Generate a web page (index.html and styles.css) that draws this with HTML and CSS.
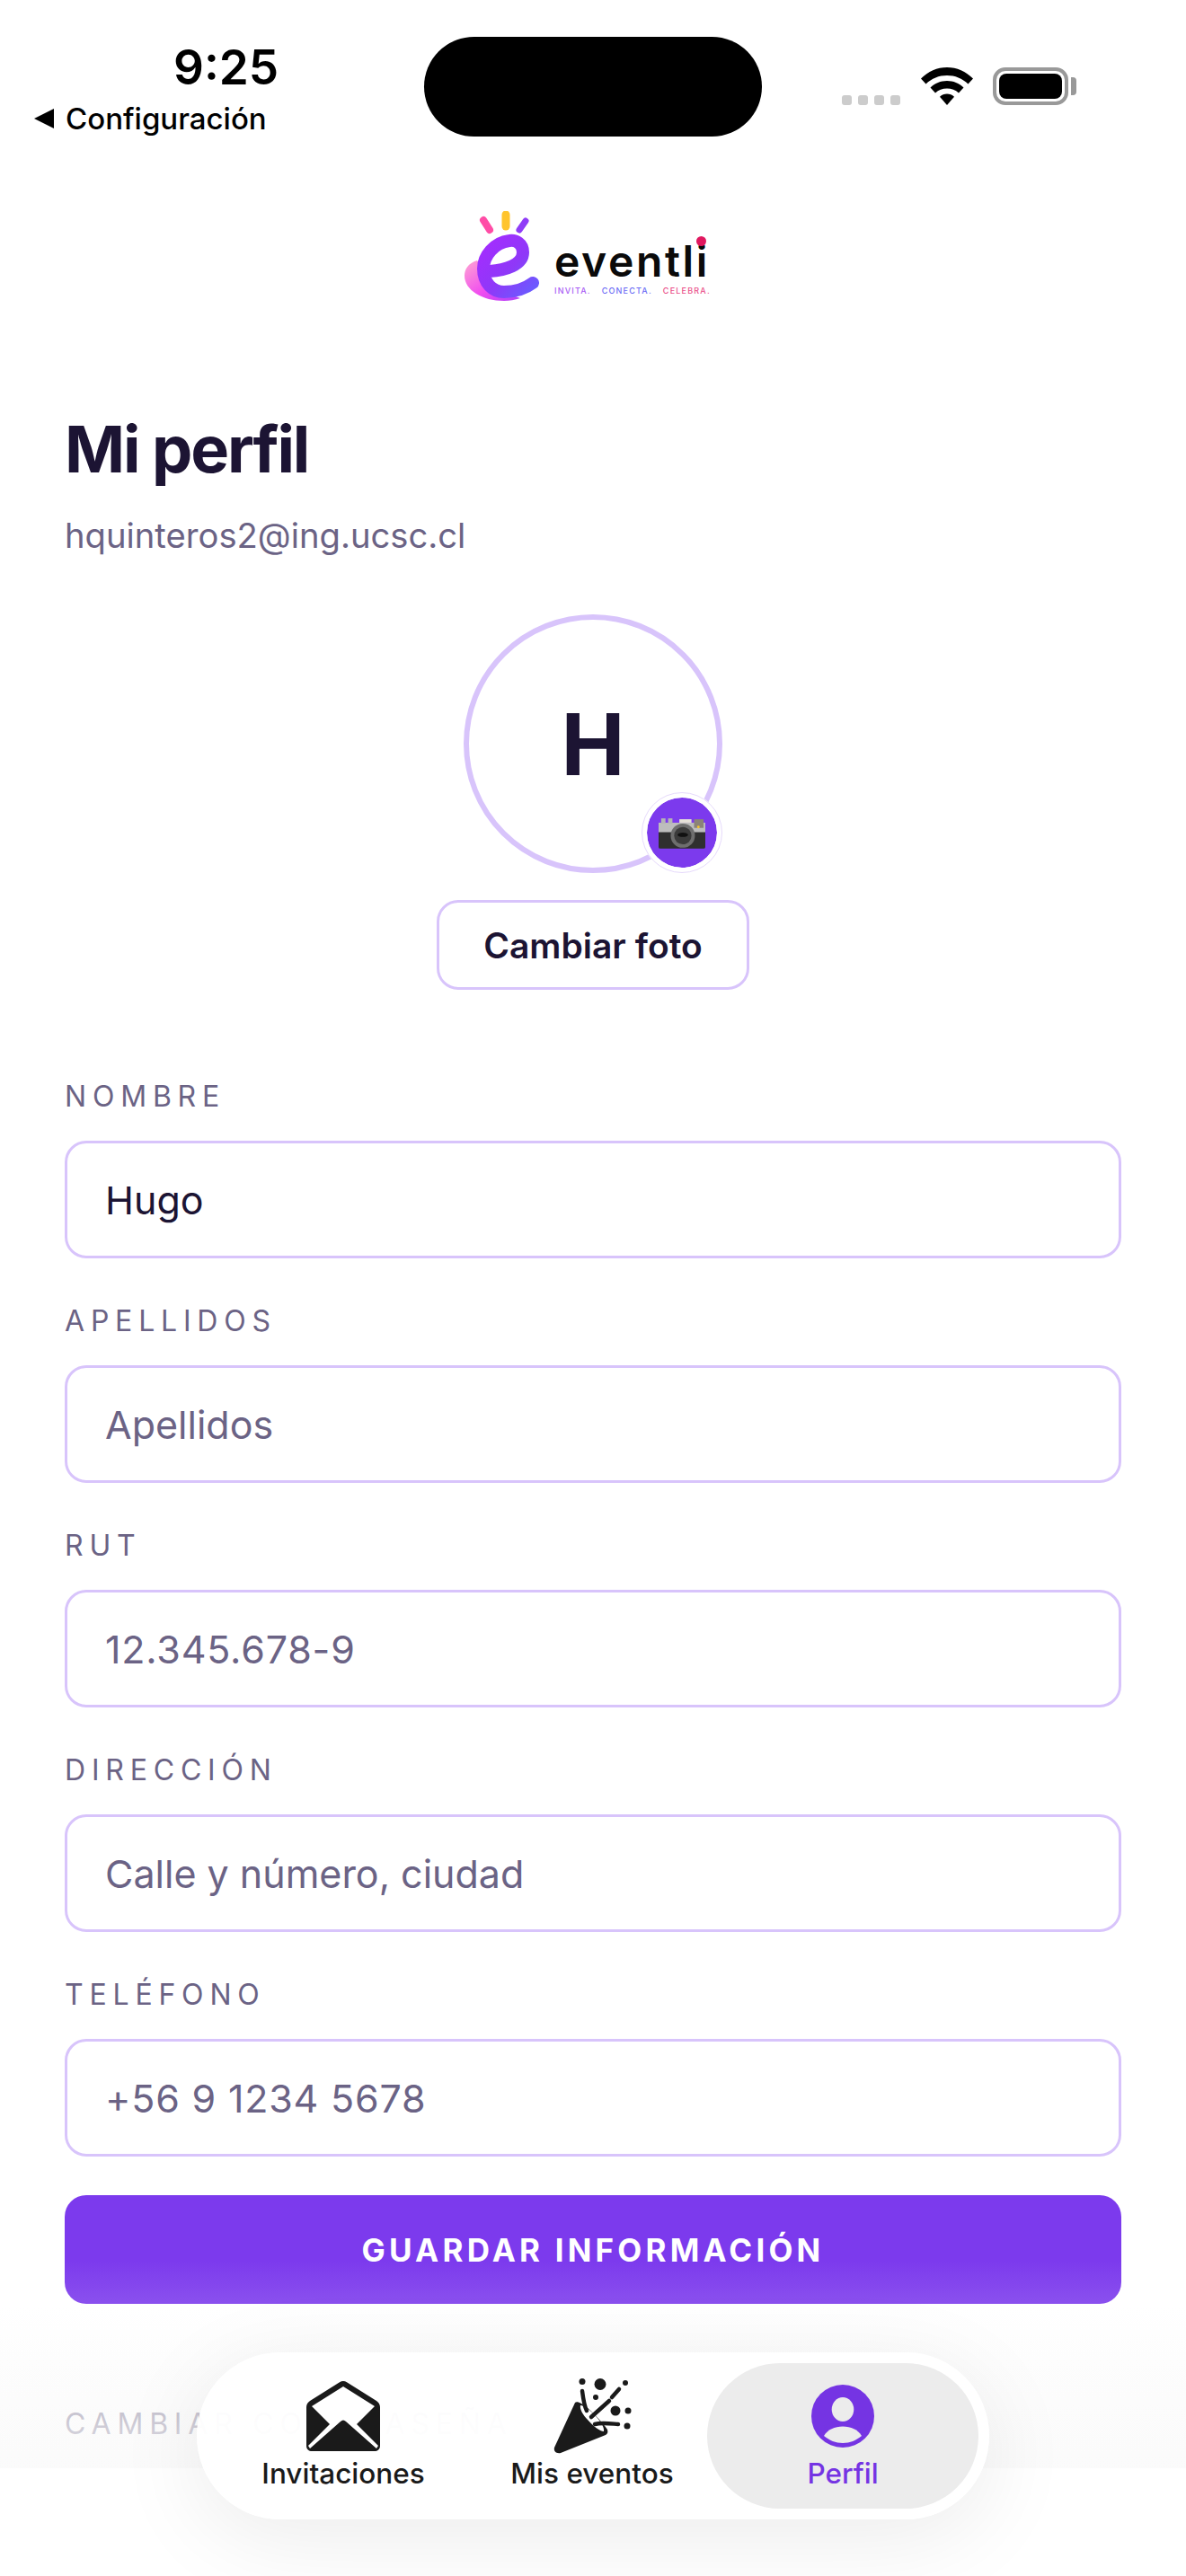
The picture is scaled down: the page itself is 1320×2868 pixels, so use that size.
FILE: index.html
```html
<!DOCTYPE html>
<html lang="es">
<head>
    <meta charset="UTF-8">
    <meta name="viewport" content="width=device-width, initial-scale=1.0">
    <title>Mi perfil - eventli</title>
    <link rel="stylesheet" href="styles.css">
</head>
<body>
    <div class="screen">
        <header class="status-bar">
            <div class="status-left">
                <div class="clock">9:25</div>
                <div class="back-link"><span class="back-arrow"></span>Configuración</div>
            </div>
            <div class="island"></div>
            <div class="status-right">
                <div class="signal"><span></span><span></span><span></span><span></span></div>
                <svg class="wifi" viewBox="0 0 58 42">
                    <path d="M29 0C40 0 50 4.500 58 12.500L52.500 18.500C46 12.300 38 9 29 9S12 12.300 5.500 18.500L0 12.500C8 4.500 18 0 29 0Z"/>
                    <path d="M29 15C36 15 42.500 17.700 47.500 22.500L42 28.500C38.500 25.200 34 23.500 29 23.500S19.500 25.200 16 28.500L10.500 22.500C15.500 17.700 22 15 29 15Z"/>
                    <path d="M29 29.500C32 29.500 34.800 30.500 37 32.800L29 42L21 32.800C23.200 30.500 26 29.500 29 29.500Z"/>
                </svg>
                <div class="battery"><div class="battery-level"></div></div>
                <div class="battery-cap"></div>
            </div>
        </header>

        <div class="logo">
            <svg class="logo-mark" viewBox="0 0 83 100">
                <defs>
                    <linearGradient id="eStroke" x1="0" y1="0" x2="1" y2="1">
                        <stop offset="0" stop-color="#a52cff"/>
                        <stop offset="0.55" stop-color="#8f38f8"/>
                        <stop offset="1" stop-color="#6a5cff"/>
                    </linearGradient>
                    <linearGradient id="eShade" x1="0" y1="0" x2="1" y2="1">
                        <stop offset="0" stop-color="#ffa6d2"/>
                        <stop offset="0.55" stop-color="#f04cf0"/>
                        <stop offset="1" stop-color="#b040f8"/>
                    </linearGradient>
                </defs>
                <path d="M21 10L28 21" stroke="#ff4da6" stroke-width="8" stroke-linecap="round"/>
                <path d="M46 4V17" stroke="#ffc42e" stroke-width="9" stroke-linecap="round"/>
                <path d="M68 11L61 21" stroke="#8f3cf7" stroke-width="7" stroke-linecap="round"/>
                <path d="M14 55C4 58 0 65 0 72C0 88 20 100 44 100C50 100 56 99 62 97L44 90C30 90 21 78 21 64Z" fill="url(#eShade)"/>
                <path d="M28 67C45 66 65 60 65 46C65 36 57 32 50 33C33 35 21 50 21 64C21 80 31 90 44 90C57 90 68 86 76 80" fill="none" stroke="url(#eStroke)" stroke-width="14" stroke-linecap="round"/>
            </svg>
            <div class="logo-text">
                <div class="logo-name">eventl<span class="logo-i">i</span></div>
                <div class="logo-tag"><span class="tag-a">INVITA.</span><span class="tag-b">CONECTA.</span><span class="tag-c">CELEBRA.</span></div>
            </div>
        </div>

        <main class="content">
            <h1 class="page-title">Mi perfil</h1>
            <p class="page-email">hquinteros2@ing.ucsc.cl</p>

            <div class="avatar-block">
                <div class="avatar">
                    H
                    <div class="avatar-badge">
                        <svg class="camera" viewBox="0 0 54 36">
                            <rect x="0" y="6" width="54" height="30" rx="2" fill="#2f2f2f"/>
                            <rect x="0" y="6" width="54" height="11" fill="#bdbdbd"/>
                            <rect x="3" y="1" width="5" height="6" fill="#b5b5b5"/>
                            <rect x="11" y="1" width="5" height="6" fill="#b5b5b5"/>
                            <rect x="24" y="2" width="14" height="4" fill="#e6e2d8"/>
                            <rect x="41" y="2" width="11" height="10" fill="#8b8378"/>
                            <circle cx="28" cy="21" r="14" fill="#6e6e6e"/>
                            <circle cx="28" cy="21" r="10" fill="#3b3b3b"/>
                            <ellipse cx="28" cy="20" rx="6" ry="2.500" fill="#111"/>
                            <circle cx="46" cy="11" r="1.500" fill="#f4c430"/>
                        </svg>
                    </div>
                </div>
                <button class="photo-button">Cambiar foto</button>
            </div>

            <form class="profile-form">
                <label class="field-label">NOMBRE</label>
                <div class="field-box field-filled">Hugo</div>
                <label class="field-label">APELLIDOS</label>
                <div class="field-box">Apellidos</div>
                <label class="field-label">RUT</label>
                <div class="field-box field-number">12.345.678-9</div>
                <label class="field-label">DIRECCIÓN</label>
                <div class="field-box">Calle y número, ciudad</div>
                <label class="field-label">TELÉFONO</label>
                <div class="field-box field-number">+56 9 1234 5678</div>
                <button class="save-button" type="button">GUARDAR INFORMACIÓN</button>
                <label class="field-label password-label">CAMBIAR CONTRASEÑA</label>
            </form>
        </main>

        <div class="bottom-fade"></div>

        <nav class="tab-bar">
            <div class="tab">
                <div class="tab-icon">
                    <svg width="82" height="78" viewBox="0 0 82 78">
                        <path d="M37 1.200C39.500 -0.400 42.500 -0.400 45 1.200L78 22C80.500 23.800 82 26 82 29V72C82 76 79 78 76 78H6C3 78 0 76 0 72V29C0 26 1.500 23.800 4 22Z" fill="#1a1a1a"/>
                        <path d="M41 6L76 28L56 48L80 72L78 75L44 45C42 43 40 43 38 45L4 75L2 72L26 48L6 28Z" fill="#fff"/>
                    </svg>
                </div>
                <span class="tab-label">Invitaciones</span>
            </div>
            <div class="tab">
                <div class="tab-icon">
                    <svg width="87" height="84" viewBox="0 0 87 84">
                        <path d="M24 27C26 25 31 27 38 33C47 41 56 51 60 57C61 60 60 62 58 63L8 83C3 84 0 81 1 77Z" fill="#1a1a1a"/>
                        <path d="M30 30C34 30 42 36 48 43C53 49 57 55 56 59C52 59 44 53 38 46C33 41 29 34 30 30Z" fill="#fff"/>
                        <g fill="none" stroke="#1a1a1a" stroke-width="4.500" stroke-linecap="round">
                            <path d="M32 14C33 22 34 30 37 36"/>
                            <path d="M62 25L42 43"/>
                            <path d="M73 12L65 21"/>
                            <path d="M46 51C53 49 60 50 72 51"/>
                        </g>
                        <g fill="#1a1a1a">
                            <circle cx="32" cy="3.500" r="3.500"/>
                            <circle cx="52" cy="6.500" r="6.500"/>
                            <circle cx="80" cy="5" r="3"/>
                            <circle cx="47" cy="21" r="3"/>
                            <circle cx="69" cy="36" r="5.500"/>
                            <circle cx="83" cy="36" r="3.500"/>
                            <circle cx="82" cy="53" r="3.500"/>
                        </g>
                    </svg>
                </div>
                <span class="tab-label">Mis eventos</span>
            </div>
            <div class="tab tab-active">
                <div class="tab-icon">
                    <svg width="70" height="70" viewBox="0 0 70 70">
                        <circle cx="35" cy="35" r="35" fill="#7534e3"/>
                        <ellipse cx="35" cy="27.500" rx="12.300" ry="13.500" fill="#ececec"/>
                        <path d="M14 57C18 50 26 46.500 35 46.500S52 50 56 57C50 62 43 65 35 65S20 62 14 57Z" fill="#ececec"/>
                    </svg>
                </div>
                <span class="tab-label">Perfil</span>
            </div>
        </nav>
    </div>
</body>
</html>
```

FILE: styles.css
```css
* {
    box-sizing: border-box;
}
html, body {
    margin: 0;
    padding: 0;
    background-color: #fff;
}
body {
    font-family: Inter, "Noto Sans", sans-serif;
    color: #1c1433;
}
.screen {
    position: relative;
    width: 1320px;
    height: 2868px;
    overflow: hidden;
    background-color: #fff;
}

/* status bar */
.status-bar {
    display: flex;
    height: 160px;
    padding-top: 41px;
}
.status-left {
    width: 472px;
    flex-shrink: 0;
}
.clock {
    margin-left: 193px;
    padding-top: 5px;
    font-size: 53px;
    line-height: 58px;
    font-weight: 600;
    color: #000;
}
.back-link {
    display: flex;
    align-items: center;
    margin-left: 38px;
    margin-top: 8px;
    font-size: 33px;
    line-height: 40px;
    font-weight: 500;
    color: #000;
}
.back-arrow {
    width: 0;
    height: 0;
    margin-right: 13px;
    border-top: 11px solid transparent;
    border-bottom: 11px solid transparent;
    border-right: 22px solid #000;
}
.island {
    width: 376px;
    height: 111px;
    flex-shrink: 0;
    background-color: #000;
    border-radius: 56px;
}
.status-right {
    display: flex;
    align-items: flex-end;
    height: 76px;
    margin-left: 89px;
}
.signal {
    display: flex;
    gap: 7px;
}
.signal span {
    width: 11px;
    height: 11px;
    border-radius: 3px;
    background-color: #ccc;
}
.wifi {
    width: 58px;
    height: 42px;
    margin-left: 23px;
}
.battery {
    width: 84px;
    height: 42px;
    margin-left: 22px;
    padding: 3px;
    border: 4px solid #999;
    border-radius: 14px;
}
.battery-level {
    width: 100%;
    height: 100%;
    background-color: #000;
    border-radius: 8px;
}
.battery-cap {
    width: 6px;
    height: 20px;
    margin-left: 3px;
    margin-bottom: 11px;
    background-color: #999;
    border-radius: 0 4px 4px 0;
}

/* logo */
.logo {
    display: flex;
    justify-content: center;
    align-items: flex-end;
    height: 180px;
    padding-bottom: 5px;
}
.logo-mark {
    width: 83px;
    height: 100px;
    margin-left: -13px;
}
.logo-text {
    width: 173px;
    margin-left: 17px;
    margin-bottom: 6px;
}
.logo-name {
    font-size: 48px;
    line-height: 48px;
    letter-spacing: 2.600px;
    font-weight: 600;
    color: #0a0a0a;
    white-space: nowrap;
}
.logo-i {
    position: relative;
}
.logo-i::before {
    content: "";
    position: absolute;
    top: 2px;
    left: 0;
    width: 11px;
    height: 11px;
    border-radius: 50%;
    background-color: #e0185f;
}
.logo-tag {
    display: flex;
    gap: 12px;
    margin-top: 4px;
    font-size: 9px;
    line-height: 10px;
    letter-spacing: 1.200px;
    font-weight: 500;
    white-space: nowrap;
}
.tag-a { color: #a85cf5; }
.tag-b { color: #6c6cf5; }
.tag-c { color: #ea4f8a; }

/* content */
.content {
    padding: 0 72px;
}
.page-title {
    margin: 119px 0 0;
    font-size: 72px;
    line-height: 82px;
    letter-spacing: -2.200px;
    font-weight: 700;
    color: #1c1433;
}
.page-email {
    margin: 32px 0 0;
    font-size: 38.200px;
    line-height: 46px;
    color: #6b6385;
}
.avatar-block {
    display: flex;
    flex-direction: column;
    align-items: center;
    margin-top: 65px;
}
.avatar {
    position: relative;
    display: flex;
    align-items: center;
    justify-content: center;
    width: 288px;
    height: 288px;
    border: 6px solid #d8c4fb;
    border-radius: 50%;
    font-size: 95px;
    font-weight: 700;
    color: #1c1433;
}
.avatar-badge {
    position: absolute;
    right: -6px;
    bottom: -6px;
    display: flex;
    align-items: center;
    justify-content: center;
    width: 90px;
    height: 90px;
    background-color: #7c3aed;
    background-clip: padding-box;
    border: 6px solid #fff;
    border-radius: 50%;
    outline: 1px solid #e6dafc;
    outline-offset: -1px;
}
.camera {
    width: 52px;
    height: 35px;
}
.photo-button {
    width: 348px;
    height: 100px;
    margin-top: 30px;
    padding: 0;
    background-color: #fff;
    border: 3px solid #d8c4fb;
    border-radius: 24px;
    font-family: inherit;
    font-size: 39px;
    font-weight: 600;
    color: #1c1433;
}

/* form */
.profile-form {
    display: flex;
    flex-direction: column;
    margin-top: 102px;
}
.field-label {
    height: 34px;
    font-size: 32px;
    line-height: 34px;
    letter-spacing: 6.800px;
    color: #6b6385;
}
.field-box {
    display: flex;
    align-items: center;
    height: 131px;
    margin-top: 32px;
    margin-bottom: 53px;
    padding-left: 42px;
    border: 3px solid #d8c4fb;
    border-radius: 24px;
    font-size: 43px;
    color: #6b6385;
}
.field-filled {
    color: #1c1433;
}
.field-number {
    letter-spacing: 0.800px;
}
.save-button {
    width: 100%;
    height: 121px;
    margin-top: -10px;
    background: linear-gradient(to bottom, #7c3aed 0%, #7c3aed 60%, #8a50ee 100%);
    border: none;
    border-radius: 24px;
    font-family: inherit;
    font-size: 35px;
    font-weight: 700;
    letter-spacing: 4.200px;
    color: #fff;
}
.password-label {
    margin-top: 117px;
    white-space: nowrap;
}

/* bottom bar, floats over the page */
.bottom-fade {
    position: absolute;
    left: 0;
    right: 0;
    top: 2566px;
    height: 182px;
    background: linear-gradient(to bottom, rgba(250,250,250,0) 0, rgba(250,250,250,0.5) 77px, rgba(250,250,250,0.85) 182px);
}
.tab-bar {
    position: absolute;
    left: 219px;
    top: 2619px;
    display: flex;
    gap: 27px;
    width: 882px;
    height: 186px;
    padding: 12px 12px 12px 38px;
    background-color: rgba(255,255,255,0.95);
    border-radius: 93px;
    box-shadow: 0 20px 100px rgba(0,0,0,0.08);
}
.tab {
    display: flex;
    flex-direction: column;
    align-items: center;
    width: 250px;
    height: 162px;
    padding-top: 17px;
    color: #1a1a1a;
}
.tab-active {
    width: 302px;
    margin-left: -24px;
    background-color: #ececec;
    border-radius: 81px;
    color: #7534e3;
}
.tab-icon {
    display: flex;
    align-items: center;
    justify-content: center;
    height: 84px;
}
.tab-label {
    margin-top: 4px;
    font-size: 31.500px;
    line-height: 36px;
    font-weight: 500;
    white-space: nowrap;
}
```
